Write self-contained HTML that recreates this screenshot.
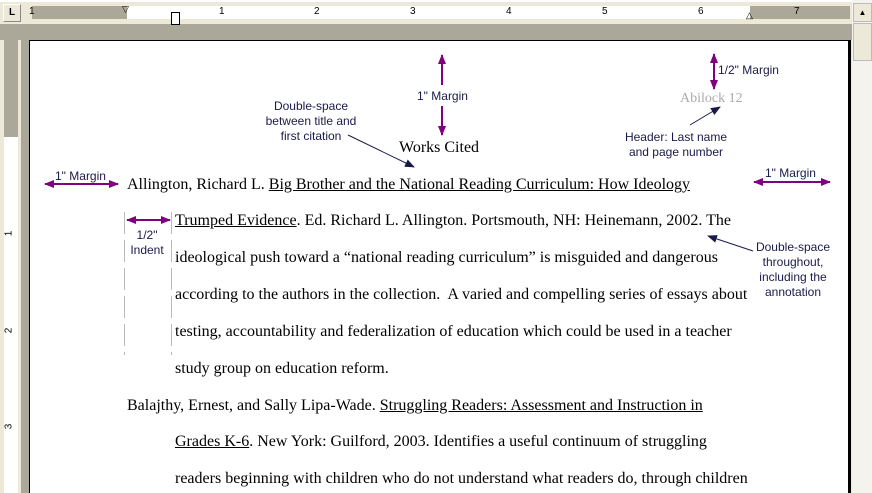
<!DOCTYPE html>
<html><head><style>
*{margin:0;padding:0}
html,body{width:872px;height:493px;overflow:hidden}
body{background:#ece9d8;position:relative;font-family:"Liberation Serif",serif}
.a{position:absolute}
.s{font-family:"Liberation Sans",sans-serif;font-size:12px;color:#1a1a4a;text-align:center;line-height:15px;position:absolute}
.t{position:absolute;font-size:16px;color:#000;white-space:nowrap;line-height:18px}
u{text-decoration:underline}
.rn{position:absolute;top:6px;font-family:"Liberation Sans",sans-serif;font-size:10px}
</style></head><body>
<div class="a" style="left:0;top:0;width:872px;height:2px;background:#fff"></div>
<div class="a" style="left:3px;top:4px;width:16px;height:16px;border:1px solid #fff;border-right-color:#888;border-bottom-color:#888;font:bold 10px 'Liberation Sans';text-align:center;line-height:16px">L</div>
<div class="a" style="left:32px;top:6px;width:818px;height:13px;background:#aca899"></div>
<div class="a" style="left:127px;top:6px;width:623px;height:13px;background:#fff"></div>
<div class="rn" style="left:29px">1</div>
<div class="rn" style="left:219px">1</div><div class="rn" style="left:314px">2</div><div class="rn" style="left:410px">3</div><div class="rn" style="left:506px">4</div><div class="rn" style="left:602px">5</div><div class="rn" style="left:698px">6</div><div class="rn" style="left:794px">7</div>
<div class="a" style="left:0;top:24px;width:852px;height:16px;background:#aca899"></div>
<div class="a" style="left:171px;top:12px;width:7px;height:11px;border:1px solid #000;background:#fff"></div>
<div class="a" style="left:122px;top:4px;font-size:9px">▽</div>
<div class="a" style="left:746px;top:10px;font-size:9px">△</div>
<div class="a" style="left:21px;top:24px;width:9px;height:469px;background:#aca899"></div>
<div class="a" style="left:4px;top:40px;width:14px;height:97px;background:#aca899"></div>
<div class="a" style="left:4px;top:137px;width:14px;height:356px;background:#fff"></div>
<div class="a" style="left:6px;top:228px;font:10px 'Liberation Sans';transform:rotate(-90deg)">1</div>
<div class="a" style="left:6px;top:325px;font:10px 'Liberation Sans';transform:rotate(-90deg)">2</div>
<div class="a" style="left:6px;top:421px;font:10px 'Liberation Sans';transform:rotate(-90deg)">3</div>
<div class="a" style="left:29px;top:40px;width:818px;height:453px;background:#fff;border-top:1px solid #000;border-left:1px solid #000;border-right:3px solid #000"></div>
<div class="a" style="left:852px;top:0;width:20px;height:493px;background:#f4f3ee"></div>
<div class="a" style="left:853px;top:3px;width:17px;height:17px;background:#ece9d8;border:1px solid #bbb;font-size:8px;text-align:center;line-height:17px">▲</div>
<div class="a" style="left:853px;top:23px;width:17px;height:36px;background:#ece9d8;border:1px solid #bbb"></div>
<svg class="a" style="left:0;top:0" width="872" height="493">
<defs><marker id="p" markerUnits="userSpaceOnUse" markerWidth="10" markerHeight="8" refX="9" refY="4" orient="auto-start-reverse"><path d="M0,0L10,4L0,8z" fill="#800080"/></marker>
<marker id="n" markerUnits="userSpaceOnUse" markerWidth="10" markerHeight="8" refX="9" refY="4" orient="auto"><path d="M0,0L10,4L0,8z" fill="#1a1a4a"/></marker></defs>
<g stroke="#800080" stroke-width="2" marker-end="url(#p)">
<line x1="442" y1="85" x2="442" y2="55"/><line x1="442" y1="106" x2="442" y2="135"/>
</g>
<g stroke="#800080" stroke-width="2" marker-start="url(#p)" marker-end="url(#p)">
<line x1="714" y1="54" x2="714" y2="89"/>
<line x1="45" y1="184" x2="118" y2="184"/>
<line x1="754" y1="182" x2="830" y2="182"/>
<line x1="127" y1="220" x2="170" y2="220"/>
</g>
<g stroke="#1a1a4a" stroke-width="1" marker-end="url(#n)">
<line x1="348" y1="135" x2="414" y2="167"/>
<line x1="690" y1="125" x2="720" y2="107"/>
<line x1="753" y1="251" x2="708" y2="236"/>
</g>
<g stroke="#bbb" stroke-width="1" stroke-dasharray="22,6"><line x1="124.5" y1="212" x2="124.5" y2="355"/><line x1="171.5" y1="212" x2="171.5" y2="355"/></g>
</svg>
<div class="s" style="left:417px;top:89px;background:#fff">1" Margin</div>
<div class="s" style="left:262px;top:99px;width:98px">Double-space between title and first citation</div>
<div class="s" style="left:718px;top:63px">1/2" Margin</div>
<div class="a" style="left:680px;top:91px;font-size:14px;color:#aaa">Abilock 12</div>
<div class="s" style="left:620px;top:130px;width:112px">Header: Last name and page number</div>
<div class="s" style="left:55px;top:169px">1" Margin</div>
<div class="s" style="left:765px;top:166px">1" Margin</div>
<div class="s" style="left:127px;top:228px;width:40px">1/2" Indent</div>
<div class="s" style="left:748px;top:240px;width:90px">Double-space throughout, including the annotation</div>
<div class="t" style="left:399px;top:139px">Works Cited</div>
<div class="t" style="left:127px;top:176px">Allington, Richard L. <u>Big Brother and the National Reading Curriculum: How Ideology</u></div>
<div class="t" style="left:175px;top:212px"><u>Trumped Evidence</u>. Ed. Richard L. Allington. Portsmouth, NH: Heinemann, 2002. The</div>
<div class="t" style="left:175px;top:249px">ideological push toward a “national reading curriculum” is misguided and dangerous</div>
<div class="t" style="left:175px;top:286px">according to the authors in the collection.&nbsp; A varied and compelling series of essays about</div>
<div class="t" style="left:175px;top:323px">testing, accountability and federalization of education which could be used in a teacher</div>
<div class="t" style="left:175px;top:360px">study group on education reform.</div>
<div class="t" style="left:127px;top:397px">Balajthy, Ernest, and Sally Lipa-Wade. <u>Struggling Readers: Assessment and Instruction in</u></div>
<div class="t" style="left:175px;top:433px"><u>Grades K-6</u>. New York: Guilford, 2003. Identifies a useful continuum of struggling</div>
<div class="t" style="left:175px;top:470px">readers beginning with children who do not understand what readers do, through children</div>
</body></html>
